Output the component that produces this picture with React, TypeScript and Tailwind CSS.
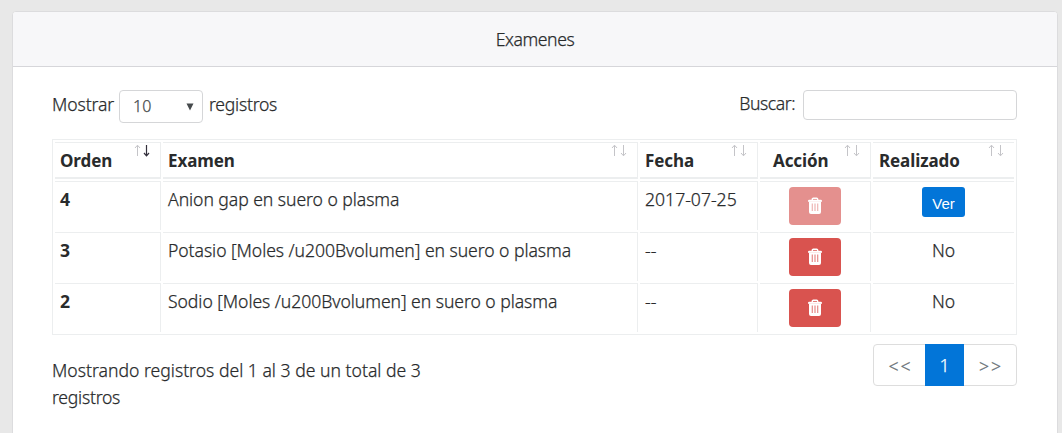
import type { ReactNode } from "react";

function SortArrows({ active = false }: { active?: boolean }) {
  return (
    <svg width="16" height="13" viewBox="0 0 16 13" fill="none" className="absolute right-[10px] top-[1px]">
      <path d="M3.5 12V1.5M1 4L3.5 1.2L6 4" stroke="#c4c4c8" strokeWidth="1" />
      <path d="M12.5 1V11.5M10 9L12.5 11.8L15 9" stroke={active ? "#33303c" : "#c4c4c8"} strokeWidth={active ? 1.2 : 1} />
    </svg>
  );
}

function Trash() {
  return (
    <svg width="16" height="18" viewBox="0 0 16 18" fill="none">
      <path d="M5.3 3V2.2Q5.3 1.2 6.3 1.2H9.7Q10.7 1.2 10.7 2.2V3" stroke="#fff" strokeWidth="1.4" />
      <path d="M1 3.8Q1 2.7 2.2 2.7H13.8Q15 2.7 15 3.8V4.7H1Z" fill="#fff" />
      <path
        fillRule="evenodd"
        d="M2 4.5H14V15Q14 17 12 17H4Q2 17 2 15ZM4.8 6.5V14H5.6V6.5ZM7.6 6.5V14H8.4V6.5ZM10.4 6.5V14H11.2V6.5Z"
        fill="#fff"
      />
    </svg>
  );
}

const head =
  "relative border-b-2 border-t border-[#eceeef] px-0 pt-[4px] text-left align-top text-[17px] font-bold leading-[27px] tracking-[-0.1px] text-[#292b2c] [-webkit-text-stroke:0px]";
const cell = "border-t border-[#eceeef] pt-[5px] align-top leading-[27px]";

function Head({ children, className, active }: { children: ReactNode; className: string; active?: boolean }) {
  return (
    <th className={`${head} ${className}`}>
      {children}
      <SortArrows active={active} />
    </th>
  );
}

const rows = [
  { orden: 4, examen: "Anion gap en suero o plasma", fecha: "2017-07-25", done: true },
  { orden: 3, examen: "Potasio [Moles /u200Bvolumen] en suero o plasma", fecha: "--", done: false },
  { orden: 2, examen: "Sodio [Moles /u200Bvolumen] en suero o plasma", fecha: "--", done: false },
];

export default function App() {
  return (
    <div className="h-[433px] overflow-hidden bg-[#e8e8e8] pl-[12px] pt-[11px] font-['Noto_Sans',sans-serif] text-[17.6px] font-light text-[#292b2c] [-webkit-text-stroke:0.25px]">
      <div className="h-[460px] w-[1046px] rounded-[4px] border border-[#dcdcde] bg-white">
        <div className="h-[55px] rounded-t-[3px] border-b border-[#d6d6da] bg-[#f7f7f9] pt-[14px] text-center leading-[27px] tracking-[-0.4px]">
          Examenes
        </div>
        <div className="pl-[39px]">
          <div className="flex h-[72px] w-[965px] items-start justify-between pt-[23px]">
            <label className="flex items-start">
              <span className="w-[67px] whitespace-nowrap leading-[29px] tracking-[-0.1px]">Mostrar</span>
              <span className="flex h-[33px] w-[84px] items-center justify-between rounded-[4px] border border-[#d5d6d8] pb-[2px] pl-[13px] pr-[8px] text-[16px] text-[#464a4c]">
                10
                <svg width="8" height="8" viewBox="0 0 8 8" className="mt-[2px]">
                  <path d="M0.5 0.5H7.5L4 7.5Z" fill="#464a4c" />
                </svg>
              </span>
              <span className="ml-[6px] leading-[29px] tracking-[-0.25px]">registros</span>
            </label>
            <label className="flex items-start">
              <span className="leading-[27px] tracking-[-0.45px]">Buscar:</span>
              <input className="ml-[8px] h-[30px] w-[214px] rounded-[4px] border border-[#d5d6d8] bg-white" />
            </label>
          </div>
          <table className="w-[965px] table-fixed border-separate border-spacing-[2px] border border-[#eceeef]">
            <thead>
              <tr className="h-[37px]">
                <Head active className="w-[106px] border-r pl-[5px]">Orden</Head>
                <Head className="w-[475px] border-r pl-[5px]">Examen</Head>
                <Head className="w-[118px] border-r pl-[5px]">Fecha</Head>
                <Head className="w-[111px] border-r pl-[13px]">Acción</Head>
                <Head className="w-[141px] pl-[6px]">Realizado</Head>
              </tr>
            </thead>
            <tbody>
              {rows.map((r) => (
                <tr key={r.orden} className="h-[49px]">
                  <td className={`${cell} border-r pl-[5px] font-bold [-webkit-text-stroke:0px]`}>
                    <div className="-mt-px">{r.orden}</div>
                  </td>
                  <td className={`${cell} border-r pl-[5px] tracking-[-0.06px]`}>
                    <div className="-mt-px">{r.examen}</div>
                  </td>
                  <td className={`${cell} border-r pl-[5px]`}>
                    <div className="-mt-px">{r.fecha}</div>
                  </td>
                  <td className={`${cell} border-r`}>
                    <button
                      className={`mx-auto flex h-[38px] w-[52px] items-center justify-center rounded-[4px] ${r.done ? "bg-[#e4908e]" : "bg-[#d9534f]"}`}
                    >
                      <Trash />
                    </button>
                  </td>
                  <td className={`${cell} text-center`}>
                    {r.done ? (
                      <button className="mx-auto flex h-[30px] w-[43px] items-center justify-center rounded-[3px] bg-[#0275d8] pt-[2px] font-['Liberation_Sans',sans-serif] text-[15px] font-normal text-white [-webkit-text-stroke:0px]">
                        Ver
                      </button>
                    ) : (
                      <div className="-mt-px">No</div>
                    )}
                  </td>
                </tr>
              ))}
            </tbody>
          </table>
          <div className="flex w-[965px] items-start justify-between pt-[9px]">
            <p className="w-[400px] pt-[13px] leading-[27px]">
              Mostrando registros del 1 al 3 de un total de 3<br />
              <span className="tracking-[-0.25px]">registros</span>
            </p>
            <nav className="flex h-[42px] w-[144px] rounded-[4px] border border-[#dddddd] leading-[42px]">
              <span className="w-[51px] pl-[2px] text-center tracking-[2px] text-[#636c72]">&lt;&lt;</span>
              <span className="-my-px h-[42px] w-[39px] bg-[#0275d8] text-center text-white">1</span>
              <span className="flex-1 pl-[2px] text-center tracking-[2px] text-[#636c72]">&gt;&gt;</span>
            </nav>
          </div>
        </div>
      </div>
    </div>
  );
}
